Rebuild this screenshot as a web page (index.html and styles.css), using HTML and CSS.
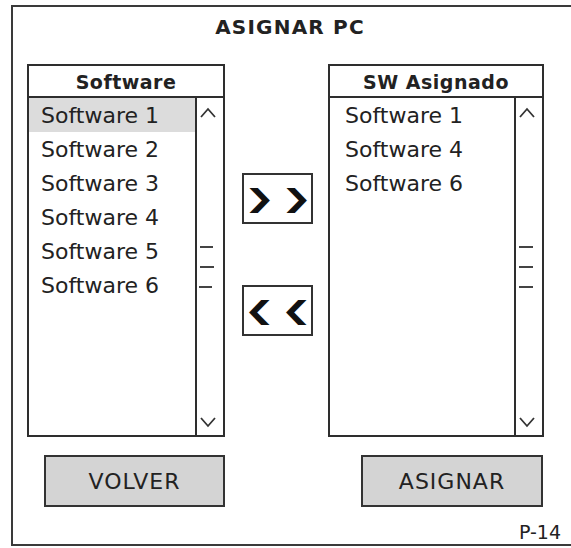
FILE: index.html
```html
<!DOCTYPE html>
<html lang="es">
<head>
<meta charset="utf-8">
<title>ASIGNAR PC</title>
<link rel="stylesheet" href="styles.css">
</head>
<body>
<div class="frame">
  <h1 class="title">ASIGNAR PC</h1>
  <div class="main">
    <section class="list list-left">
      <div class="list-head">Software</div>
      <div class="list-body">
        <ul class="rows">
          <li class="row selected">Software 1</li>
          <li class="row">Software 2</li>
          <li class="row">Software 3</li>
          <li class="row">Software 4</li>
          <li class="row">Software 5</li>
          <li class="row">Software 6</li>
        </ul>
        <div class="scroll">
          <svg class="scroll-svg" width="26" height="337" viewBox="0 0 26 337">
            <polyline points="4,19 11,11 18,19" class="caret"/>
            <line x1="3" y1="149" x2="16" y2="149" class="mark"/>
            <line x1="3" y1="169" x2="17" y2="169" class="mark"/>
            <line x1="2" y1="189" x2="15" y2="189" class="mark"/>
            <polyline points="4,320 11,328 18,320" class="caret"/>
          </svg>
        </div>
      </div>
    </section>
    <div class="arrows">
      <button class="arrow"><span class="chev">❯</span><span class="chev">❯</span></button>
      <button class="arrow"><span class="chev">❮</span><span class="chev">❮</span></button>
    </div>
    <section class="list list-right">
      <div class="list-head">SW Asignado</div>
      <div class="list-body">
        <ul class="rows">
          <li class="row">Software 1</li>
          <li class="row">Software 4</li>
          <li class="row">Software 6</li>
        </ul>
        <div class="scroll">
          <svg class="scroll-svg" width="26" height="337" viewBox="0 0 26 337">
            <polyline points="4,19 11,11 18,19" class="caret"/>
            <line x1="3" y1="149" x2="17" y2="149" class="mark"/>
            <line x1="3" y1="169" x2="17" y2="169" class="mark"/>
            <line x1="3" y1="189" x2="17" y2="189" class="mark"/>
            <polyline points="4,320 11,328 18,320" class="caret"/>
          </svg>
        </div>
      </div>
    </section>
  </div>
  <div class="actions">
    <button class="btn btn-back">VOLVER</button>
    <button class="btn btn-assign">ASIGNAR</button>
  </div>
  <div class="page-id">P-14</div>
</div>
</body>
</html>
```
FILE: styles.css
```css
html, body {
  margin: 0;
  padding: 0;
  overflow: hidden;
  background: #ffffff;
}
body {
  font-family: "DejaVu Sans", sans-serif;
  color: #222222;
}
.frame {
  margin: 5px 0 0 11px;
  width: 560px;
  height: 541px;
  box-sizing: border-box;
  border: 2px solid #3a3a3a;
  border-right: none;
}
.title {
  margin: 8px 0 0;
  width: 554px;
  text-align: center;
  font-size: 20px;
  font-weight: bold;
  line-height: 24px;
  letter-spacing: 1.2px;
}
.main {
  display: flex;
  margin-top: 25px;
  padding-left: 14px;
  height: 373px;
}
.list {
  box-sizing: border-box;
  border: 2px solid #2e2e2e;
  display: flex;
  flex-direction: column;
  height: 373px;
}
.list-left {
  width: 198px;
}
.list-right {
  width: 216px;
  margin-left: 15px;
}
.list-head {
  height: 30px;
  border-bottom: 2px solid #2e2e2e;
  text-align: center;
  font-weight: bold;
  font-size: 19px;
  line-height: 32px;
  letter-spacing: 0.5px;
}
.list-body {
  flex: 1;
  display: flex;
}
.rows {
  flex: 1;
  list-style: none;
  margin: 0;
  padding: 0;
}
.row {
  height: 34px;
  line-height: 36px;
  padding-left: 12px;
  font-size: 22px;
}
.list-right .row {
  padding-left: 15px;
}
.selected {
  background: #dcdcdc;
}
.scroll {
  width: 26px;
  border-left: 2px solid #2e2e2e;
}
.scroll-svg {
  display: block;
}
.caret {
  fill: none;
  stroke: #333333;
  stroke-width: 1.8;
}
.mark {
  stroke: #444444;
  stroke-width: 2;
}
.arrows {
  width: 71px;
  margin-left: 17px;
  display: flex;
  flex-direction: column;
  padding-top: 109px;
  gap: 61px;
}
.arrow {
  height: 51px;
  width: 71px;
  box-sizing: border-box;
  border: 2px solid #333333;
  background: #ffffff;
  font-family: "DejaVu Sans", sans-serif;
  font-size: 25px;
  font-weight: bold;
  line-height: 1;
  color: #111111;
  padding: 0;
  display: flex;
  align-items: center;
  justify-content: center;
  gap: 16px;
}
.chev {
  display: inline-block;
  transform: scaleX(1.5);
}
.actions {
  display: flex;
  margin-top: 18px;
  padding-left: 31px;
}
.btn {
  height: 52px;
  box-sizing: border-box;
  border: 2px solid #333333;
  background: #d4d4d4;
  font-family: "DejaVu Sans", sans-serif;
  font-size: 22px;
  color: #222222;
  padding: 0;
  letter-spacing: 1px;
}
.btn-back {
  width: 181px;
}
.btn-assign {
  width: 182px;
  margin-left: 136px;
}
.page-id {
  width: 548px;
  text-align: right;
  margin-top: 15px;
  line-height: 20px;
  font-size: 19px;
}
```
